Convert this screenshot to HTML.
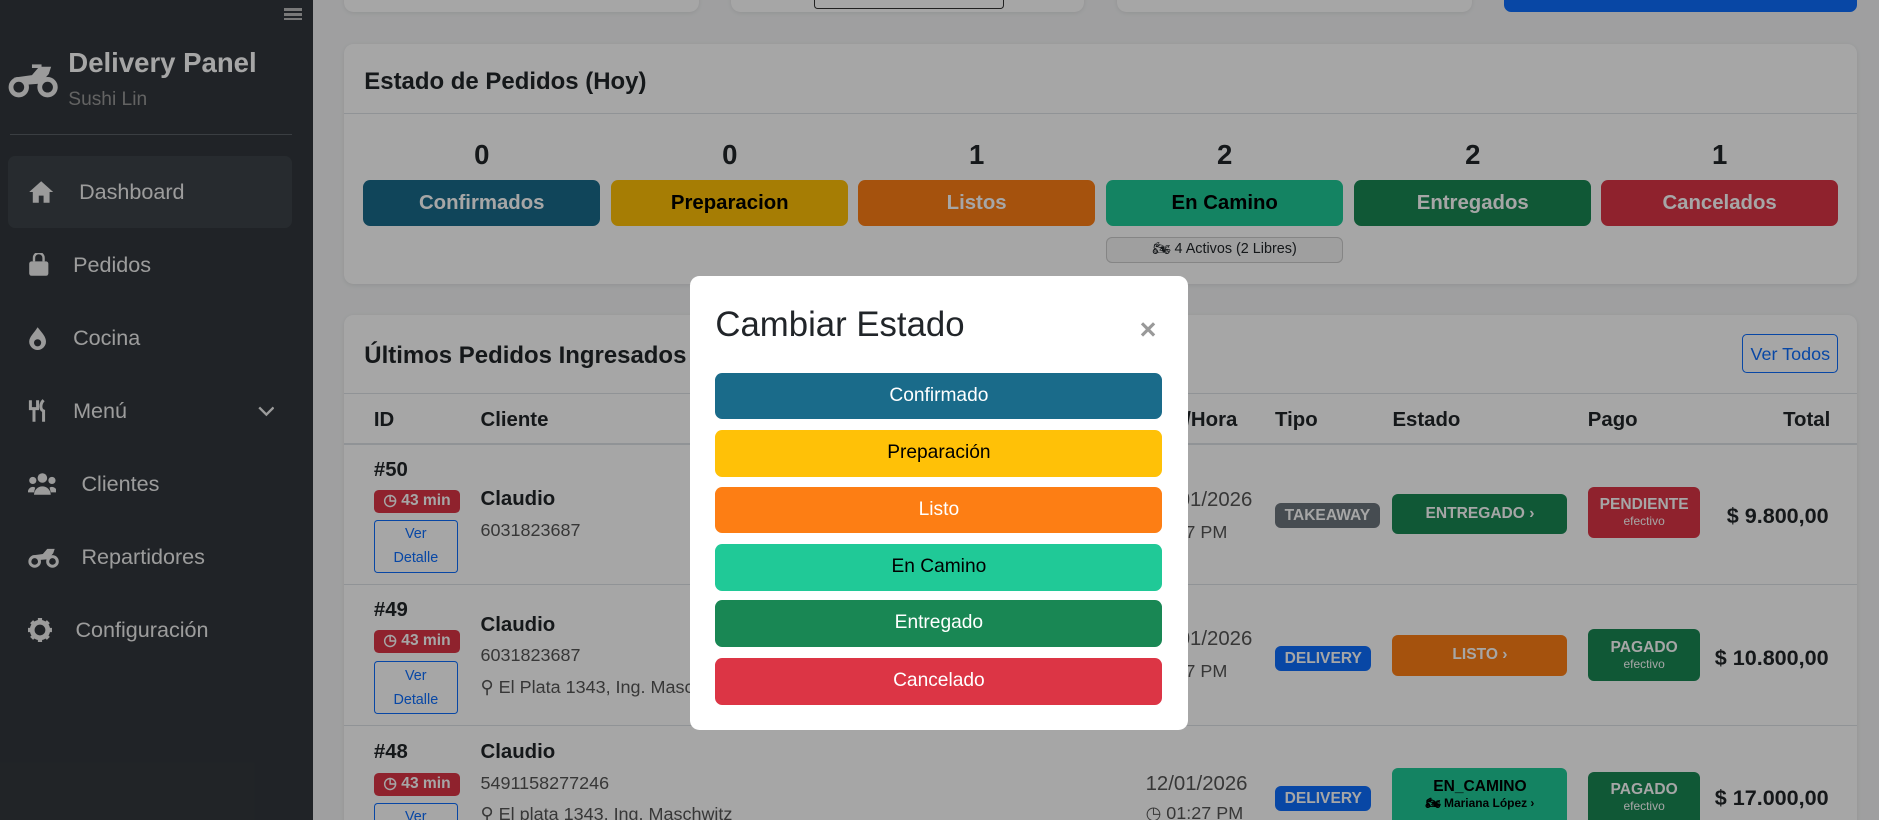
<!DOCTYPE html>
<html><head><meta charset="utf-8"><style>
html{zoom:1.19834}
html,body{margin:0;padding:0;overflow:hidden}
body{width:1568px;height:684px;background:#f4f5f6;font-family:"Liberation Sans",Arial,sans-serif;color:#212529}
#root{position:relative;width:1568px;height:684px;overflow:hidden;background:#f4f5f6}
.sb{position:absolute;left:0;top:0;width:261px;height:684px;background:#32373c;color:#fff}
.sb .it{position:absolute;left:7px;width:237px;height:60px;font-size:18px;color:#f0f0f0}
.sb .it span{position:absolute;top:50%;transform:translateY(-50%)}
.sb .it svg{position:absolute;left:16px;top:50%;transform:translateY(-50%)}
.card{position:absolute;background:#fff;border-radius:8px;box-shadow:0 1px 4px rgba(0,0,0,.08)}
.hdr{position:absolute;left:17px;font-size:20px;font-weight:bold}
.num{position:absolute;width:198px;text-align:center;font-size:23px;font-weight:bold;top:79px}
.sbtn{position:absolute;width:198px;height:39px;top:113px;border-radius:6px;color:#fff;font-weight:bold;font-size:17px;text-align:center;line-height:39px}
.th{position:absolute;top:341px;font-weight:bold;font-size:17px}
.a{position:absolute;font-size:15px;color:#555}
.b{position:absolute;font-weight:bold}
.tm{position:absolute;left:312px;width:72px;height:19px;background:#dc3545;color:#fff;border-radius:4px;font-size:13px;font-weight:bold;line-height:19px;text-align:center}
.vd{position:absolute;left:312px;width:70px;height:44px;border:1px solid #0d6efd;border-radius:3px;color:#0d6efd;font-size:12px;text-align:center;line-height:20px;padding-top:2px;box-sizing:border-box}
.tg{position:absolute;height:21px;border-radius:5px;color:#fff;font-weight:bold;font-size:13px;line-height:21px;padding:0 8px}
.st{position:absolute;left:1162px;width:146px;border-radius:5px;color:#fff;font-weight:bold;font-size:13px;text-align:center}
.pg{position:absolute;left:1325px;width:94px;border-radius:5px;color:#fff;font-weight:bold;font-size:13px;text-align:center}
.pg small{display:block;font-size:10px;font-weight:normal}
.tot{position:absolute;right:42px;font-weight:bold;font-size:18px}
.ov{position:absolute;left:0;top:0;width:1568px;height:684px;background:rgba(0,0,0,.35)}
.modal{position:absolute;left:576px;top:230px;width:415px;height:379px;background:#fff;border-radius:8px}
.mb{position:absolute;left:21px;width:373px;height:39px;border-radius:6px;text-align:center;line-height:39px;font-size:16px;color:#fff}
</style></head><body><div id="root">
<div class="sb">
 <div style="position:absolute;left:237px;top:5px;width:15px;">
  <div style="height:2px;background:#bbb;margin:2px 0"></div><div style="height:2px;background:#bbb;margin:2px 0"></div><div style="height:2px;background:#bbb;margin:2px 0"></div></div>
 <svg style="position:absolute;left:7px;top:52px" width="42" height="30" viewBox="0 0 42 30"><circle cx="9" cy="21" r="6.5" fill="none" stroke="#eee" stroke-width="4"/><circle cx="33" cy="21" r="6.5" fill="none" stroke="#eee" stroke-width="4"/><path d="M5 13 L20 11 L26 4 L36 4 L34 10 L27 18 L15 19 Z" fill="#eee"/><path d="M20 2h8v3h-8z" fill="#eee"/></svg>
 <div style="position:absolute;left:57px;top:39px;font-size:23px;font-weight:bold">Delivery Panel</div>
 <div style="position:absolute;left:57px;top:74px;font-size:16px;color:#999">Sushi Lin</div>
 <div style="position:absolute;left:8px;top:112px;width:236px;height:1px;background:#5a6066"></div>
 <div class="it" style="top:130px;background:#3d4349;border-radius:6px"><svg width="22" height="20" viewBox="0 0 22 20"><path d="M11 1 L21 10 H18 V19 H13 V13 H9 V19 H4 V10 H1 Z" fill="#eee"/></svg><span style="left:59px">Dashboard</span></div>
 <div class="it" style="top:191px"><svg width="18" height="20" viewBox="0 0 18 20"><path d="M5 7 V4 a4 4 0 0 1 8 0 V7" fill="none" stroke="#eee" stroke-width="2"/><rect x="1" y="7" width="16" height="12" rx="2" fill="#eee"/></svg><span style="left:54px">Pedidos</span></div>
 <div class="it" style="top:252px"><svg width="16" height="20" viewBox="0 0 16 20"><path d="M8 1 C12 6 15 9 15 13 a7 7 0 0 1 -14 0 C1 9 5 6 8 1Z" fill="#eee"/><circle cx="8" cy="14" r="3" fill="#32373c"/></svg><span style="left:54px">Cocina</span></div>
 <div class="it" style="top:313px"><svg width="18" height="20" viewBox="0 0 18 20"><path d="M2 1v7h6V1M5 8v11M13 1c-3 3-3 8 0 9v9" fill="none" stroke="#eee" stroke-width="2.5"/></svg><span style="left:54px">Menú</span><svg style="left:208px" width="14" height="10" viewBox="0 0 14 10"><path d="M1 2l6 6 6-6" fill="none" stroke="#eee" stroke-width="2"/></svg></div>
 <div class="it" style="top:374px"><svg width="24" height="20" viewBox="0 0 24 20"><circle cx="12" cy="5" r="4" fill="#eee"/><circle cx="4" cy="7" r="3" fill="#eee"/><circle cx="20" cy="7" r="3" fill="#eee"/><path d="M5 19 a7 7 0 0 1 14 0Z M0 17 a4 4 0 0 1 6-4 L5 17Z M24 17 a4 4 0 0 0 -6-4 L19 17Z" fill="#eee"/></svg><span style="left:61px">Clientes</span></div>
 <div class="it" style="top:435px"><svg width="26" height="19" viewBox="0 0 42 30"><circle cx="9" cy="21" r="6.5" fill="none" stroke="#eee" stroke-width="4"/><circle cx="33" cy="21" r="6.5" fill="none" stroke="#eee" stroke-width="4"/><path d="M5 13 L20 11 L26 4 L36 4 L34 10 L27 18 L15 19 Z" fill="#eee"/></svg><span style="left:61px">Repartidores</span></div>
 <div class="it" style="top:496px"><svg width="20" height="20" viewBox="0 0 20 20"><circle cx="10" cy="10" r="6.5" fill="none" stroke="#eee" stroke-width="4"/><path d="M10 0v4M10 16v4M0 10h4M16 10h4M3 3l3 3M14 14l3 3M17 3l-3 3M6 14l-3 3" stroke="#eee" stroke-width="3.5"/></svg><span style="left:56px">Configuración</span></div>
</div>

<div class="card" style="left:287px;top:-10px;width:296px;height:20px"></div>
<div class="card" style="left:610px;top:-10px;width:295px;height:20px"><div style="position:absolute;left:69px;top:0;width:157px;height:16px;border:1px solid #333;border-radius:3px"></div></div>
<div class="card" style="left:932px;top:-10px;width:296px;height:20px"></div>
<div style="position:absolute;left:1255px;top:-10px;width:295px;height:20px;background:#0d6efd;border-radius:6px"></div>

<div class="card" style="left:287px;top:37px;width:1263px;height:200px">
 <div class="hdr" style="top:20px">Estado de Pedidos (Hoy)</div>
 <div style="position:absolute;left:0;top:57px;width:100%;height:1px;background:#dee2e6"></div>
 <div class="num" style="left:16px">0</div><div class="num" style="left:223px">0</div><div class="num" style="left:429px">1</div><div class="num" style="left:636px">2</div><div class="num" style="left:843px">2</div><div class="num" style="left:1049px">1</div>
 <div class="sbtn" style="left:16px;background:#1a6b8a">Confirmados</div>
 <div class="sbtn" style="left:223px;background:#ffc107;color:#000">Preparacion</div>
 <div class="sbtn" style="left:429px;background:#fd7e14">Listos</div>
 <div class="sbtn" style="left:636px;background:#20c997;color:#000">En Camino</div>
 <div class="sbtn" style="left:843px;background:#198754">Entregados</div>
 <div class="sbtn" style="left:1049px;background:#dc3545">Cancelados</div>
 <div style="position:absolute;left:636px;top:161px;width:196px;height:20px;border:1px solid #ccc;border-radius:5px;background:#f4f4f4;font-size:12px;text-align:center;line-height:20px">🏍 4 Activos (2 Libres)</div>
</div>

<div class="card" style="left:287px;top:263px;width:1263px;height:450px"></div>
<div class="hdr" style="left:304px;top:285px">Últimos Pedidos Ingresados</div>
<div style="position:absolute;left:1454px;top:279px;width:80px;height:32px;border:1px solid #0d6efd;border-radius:4px;color:#0d6efd;font-size:15px;text-align:center;line-height:32px;box-sizing:border-box">Ver Todos</div>
<div style="position:absolute;left:287px;top:328px;width:1263px;height:1px;background:#dee2e6"></div>
<div class="th" style="left:312px">ID</div><div class="th" style="left:401px">Cliente</div><div class="th" style="left:940px">Fecha/Hora</div><div class="th" style="left:1064px">Tipo</div><div class="th" style="left:1162px">Estado</div><div class="th" style="left:1325px">Pago</div><div class="th" style="left:1488px">Total</div>
<div style="position:absolute;left:287px;top:370px;width:1263px;height:1px;background:#dee2e6"></div>
<div style="position:absolute;left:287px;top:487px;width:1263px;height:1px;background:#dee2e6"></div>
<div style="position:absolute;left:287px;top:605px;width:1263px;height:1px;background:#dee2e6"></div>

<div class="b" style="left:312px;top:383px;font-size:17px">#50</div>
<div class="tm" style="top:409px">◷ 43 min</div><div class="vd" style="top:434px">Ver<br>Detalle</div>
<div class="b" style="left:401px;top:407px;font-size:17px">Claudio</div><div class="a" style="left:401px;top:434px">6031823687</div>
<div class="a" style="left:960px;top:408px;font-size:17px">12/01/2026</div><div class="a" style="left:960px;top:436px">01:27 PM</div>
<div class="tg" style="left:1064px;top:420px;background:#6c757d">TAKEAWAY</div>
<div class="st" style="top:412px;height:34px;line-height:34px;background:#198754">ENTREGADO ›</div>
<div class="pg" style="top:406px;height:43px;background:#dc3545;padding-top:8px;box-sizing:border-box">PENDIENTE<small>efectivo</small></div>
<div class="tot" style="top:420px">$ 9.800,00</div>

<div class="b" style="left:312px;top:500px;font-size:17px">#49</div>
<div class="tm" style="top:526px">◷ 43 min</div><div class="vd" style="top:552px">Ver<br>Detalle</div>
<div class="b" style="left:401px;top:512px;font-size:17px">Claudio</div><div class="a" style="left:401px;top:538px">6031823687</div><div class="a" style="left:401px;top:565px">⚲ El Plata 1343, Ing. Maschwitz</div>
<div class="a" style="left:960px;top:524px;font-size:17px">12/01/2026</div><div class="a" style="left:960px;top:552px">01:27 PM</div>
<div class="tg" style="left:1064px;top:539px;background:#0d6efd">DELIVERY</div>
<div class="st" style="top:530px;height:34px;line-height:34px;background:#fd7e14">LISTO ›</div>
<div class="pg" style="top:525px;height:43px;background:#198754;padding-top:8px;box-sizing:border-box">PAGADO<small>efectivo</small></div>
<div class="tot" style="top:538px">$ 10.800,00</div>

<div class="b" style="left:312px;top:618px;font-size:17px">#48</div>
<div class="tm" style="top:645px">◷ 43 min</div><div class="vd" style="top:670px">Ver</div>
<div class="b" style="left:401px;top:618px;font-size:17px">Claudio</div><div class="a" style="left:401px;top:645px">5491158277246</div><div class="a" style="left:401px;top:671px">⚲ El plata 1343, Ing. Maschwitz</div>
<div class="a" style="left:956px;top:645px;font-size:17px">12/01/2026</div><div class="a" style="left:956px;top:670px">◷ 01:27 PM</div>
<div class="tg" style="left:1064px;top:656px;background:#0d6efd">DELIVERY</div>
<div class="st" style="top:641px;height:50px;background:#20c997;color:#000;padding-top:8px;box-sizing:border-box">EN_CAMINO<div style="font-size:10px">🏍 Mariana López ›</div></div>
<div class="pg" style="top:644px;height:45px;background:#198754;padding-top:8px;box-sizing:border-box">PAGADO<small>efectivo</small></div>
<div class="tot" style="top:655px">$ 17.000,00</div>

<div class="ov"></div>
<div class="modal">
 <div style="position:absolute;left:21px;top:25px;font-size:29px;color:#212529">Cambiar Estado</div>
 <div style="position:absolute;left:375px;top:32px;font-size:24px;color:#999;font-weight:bold">×</div>
 <div class="mb" style="top:81px;background:#1a6b8a">Confirmado</div>
 <div class="mb" style="top:129px;background:#ffc107;color:#000">Preparación</div>
 <div class="mb" style="top:176px;background:#fd7e14">Listo</div>
 <div class="mb" style="top:224px;background:#20c997;color:#000">En Camino</div>
 <div class="mb" style="top:271px;background:#198754">Entregado</div>
 <div class="mb" style="top:319px;background:#dc3545">Cancelado</div>
</div>
</div></body></html>
